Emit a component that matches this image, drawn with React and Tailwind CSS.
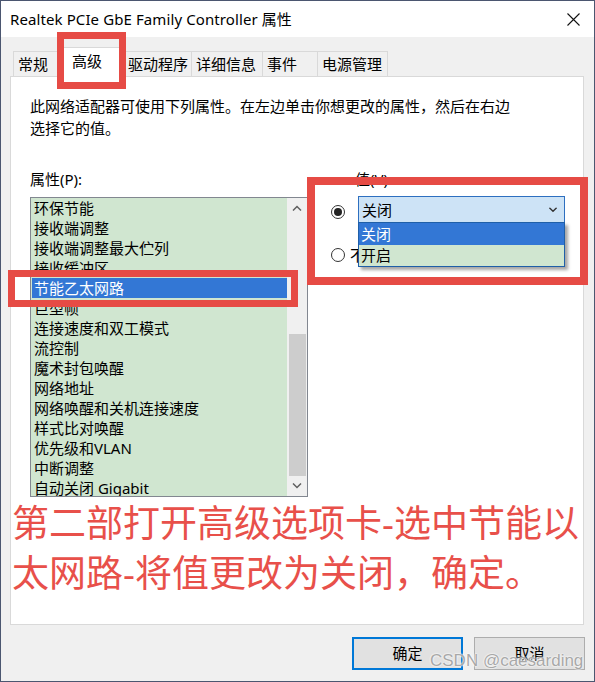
import React from 'react';

const font = "font-['Noto_Sans','Noto_Sans_CJK_SC',sans-serif]";

const items = [
  '环保节能',
  '接收端调整',
  '接收端调整最大伫列',
  '接收缓冲区',
  '节能乙太网路',
  '巨型帧',
  '连接速度和双工模式',
  '流控制',
  '魔术封包唤醒',
  '网络地址',
  '网络唤醒和关机连接速度',
  '样式比对唤醒',
  '优先级和VLAN',
  '中断调整',
  '自动关闭 Gigabit',
];

const tabs = [
  { label: '常规', w: 'w-[45px]' },
  { label: '高级', w: 'w-[66px]', active: true },
  { label: '驱动程序', w: 'w-[68px]' },
  { label: '详细信息', w: 'w-[71px]' },
  { label: '事件', w: 'w-[55px]' },
  { label: '电源管理', w: 'w-[70px]' },
];

const Chevron = ({ up, className }) => (
  <svg width="10" height="6" viewBox="0 0 10 6" className={className}>
    <path
      d={up ? 'M1 5.5 L5 1.5 L9 5.5' : 'M1 0.5 L5 4.5 L9 0.5'}
      fill="none"
      stroke="currentColor"
      strokeWidth="1.5"
    />
  </svg>
);

const Radio = ({ checked }) => (
  <div className="w-[14px] h-[14px] rounded-full border border-[#333] bg-white flex items-center justify-center shrink-0">
    {checked && <div className="w-[8px] h-[8px] rounded-full bg-[#222]" />}
  </div>
);

export default function App() {
  return (
    <div className={`${font} relative w-[595px] h-[682px] bg-[#f0f0f0] border border-[#4b5670] flex flex-col overflow-hidden text-black`}>
      {/* title bar */}
      <div className="h-[36px] bg-white flex items-center justify-between pl-[9px] pr-[14px] shrink-0">
        <span className="text-[15px] leading-none tracking-[0.1px]">Realtek PCIe GbE Family Controller 属性</span>
        <svg width="13" height="13" viewBox="0 0 13 13">
          <path d="M0.5 0.5 L12.5 12.5 M12.5 0.5 L0.5 12.5" stroke="#111" strokeWidth="1.1" />
        </svg>
      </div>

      {/* tabs */}
      <div className="flex items-end pt-[9px] pl-[12px] h-[39px] shrink-0">
        {tabs.map((t) =>
          t.active ? (
            <div
              key={t.label}
              className={`${t.w} h-[30px] -mb-px bg-white border border-b-0 border-[#d9d9d9] relative z-10 pl-[13px] pt-[3px] text-[15px] leading-[20px]`}
            >
              {t.label}
            </div>
          ) : (
            <div
              key={t.label}
              className={`${t.w} h-[25px] bg-[#f0f0f0] border border-b-0 border-l-0 first:border-l border-[#d9d9d9] pl-[4px] pt-[1px] text-[15px] leading-[22px]`}
            >
              {t.label}
            </div>
          )
        )}
      </div>

      {/* panel */}
      <div className="ml-[9px] w-[574px] h-[549px] bg-white border border-[#d9d9d9] shrink-0 flex flex-col">
        <p className="pl-[19px] pt-[18px] text-[15px] leading-[22px] whitespace-nowrap">
          此网络适配器可使用下列属性。在左边单击你想更改的属性，然后在右边
          <br />
          选择它的值。
        </p>

        <div className="flex mt-[30px] pl-[19px]">
          <div className="flex flex-col">
            <div className="text-[15px] leading-[20px] h-[20px]">属性(P):</div>
            <div className="mt-[8px] w-[278px] h-[300px] border border-[#828790] flex">
              <div className="w-[256px] h-full bg-[#d0e6d0] overflow-hidden">
                {items.map((it) =>
                  it === '节能乙太网路' ? (
                    <div key={it} className="h-[20px] ml-[1px] bg-[#3377d5] text-white pl-[2px] text-[15px] leading-[20px] whitespace-nowrap">
                      {it}
                    </div>
                  ) : (
                    <div key={it} className="h-[20px] pl-[3px] text-[15px] leading-[20px] whitespace-nowrap">
                      {it}
                    </div>
                  )
                )}
              </div>
              <div className="w-[20px] h-full bg-[#f0f0f0] flex flex-col items-center text-[#606060]">
                <div className="h-[20px] flex items-center justify-center">
                  <Chevron up />
                </div>
                <div className="h-[116px]" />
                <div className="h-[142px] w-[17px] bg-[#cdcdcd]" />
                <div className="flex-1 flex items-center justify-center">
                  <Chevron />
                </div>
              </div>
            </div>
          </div>

          <div className="flex flex-col ml-[23px]">
            <div className="pl-[24px] text-[15px] leading-[20px] h-[20px]">值(V):</div>
            <div className="flex items-start mt-[7px]">
              <div className="mt-[9px]">
                <Radio checked />
              </div>
              <div className="relative ml-[13px] w-[207px] h-[27px] bg-[#cde3f6] border border-[#2d6fc0] flex items-center justify-between pl-[3px] pr-[6px]">
                <span className="text-[15px] leading-[20px]">关闭</span>
                <Chevron className="text-[#333] scale-90" />
                <div className="absolute top-full -left-px w-[207px] border border-[#1f5fa8] bg-[#d0e6d0] shadow-[3px_3px_3px_rgba(0,0,0,0.35)] z-10">
                  <div className="h-[22px] bg-[#3377d5] text-white pl-[2px] text-[15px] leading-[22px]">关闭</div>
                  <div className="h-[21px] pl-[2px] text-[15px] leading-[21px]">开启</div>
                </div>
              </div>
            </div>
            <div className="flex items-center mt-[24px] h-[16px]">
              <Radio />
              <span className="ml-[5px] text-[15px] leading-[16px]">不存在</span>
            </div>
          </div>
        </div>

        <p className="mt-[1px] pl-[1px] text-[37px] leading-[50px] text-[#e8504a] whitespace-nowrap">
          第二部打开高级选项卡-选中节能以
          <br />
          太网路-将值更改为关闭，确定。
        </p>
      </div>

      {/* buttons */}
      <div className="flex justify-end gap-[11px] pr-[9px] mt-[12px]">
        <button className="w-[111px] h-[33px] bg-[#e1e1e1] border-2 border-[#0078d7] text-[15px]">确定</button>
        <button className="w-[111px] h-[33px] bg-[#e1e1e1] border border-[#adadad] text-[15px]">取消</button>
      </div>

      {/* annotation boxes */}
      <div className="absolute left-[56px] top-[31px] w-[69px] h-[57px] border-[7px] border-[#e64b45] z-20" />
      <div className="absolute left-[7px] top-[269px] w-[290px] h-[37px] border-[7px] border-[#e64b45] z-20" />
      <div className="absolute left-[306px] top-[176px] w-[281px] h-[108px] border-[8px] border-[#e64b45] z-20" />

      {/* watermark */}
      <div className="absolute left-[429px] top-[650px] z-30 font-['Liberation_Sans',sans-serif] text-[17px] leading-[20px] text-[#a8a8a8] [text-shadow:0_0_2px_#fff,0_0_2px_#fff]">
        CSDN @caesarding
      </div>
    </div>
  );
}
